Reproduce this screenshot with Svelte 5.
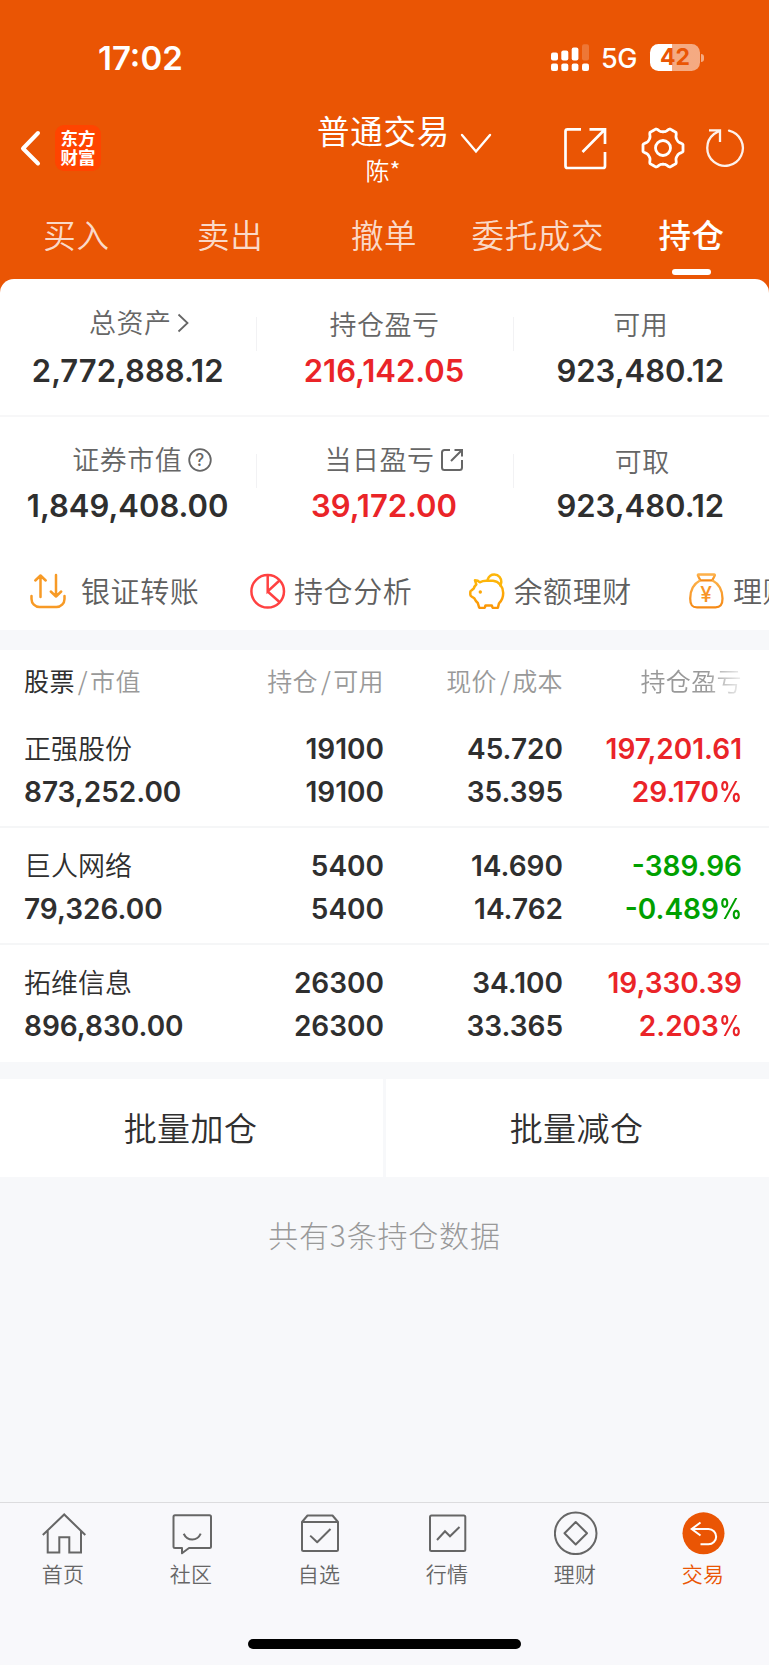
<script lang="ts">
  interface Stat {
    label: string;
    value: string;
    icon?: "arrow" | "help" | "share";
    shift?: number;
    up?: boolean;
  }

  interface Holding {
    name: string;
    marketValue: string;
    amount: string;
    available: string;
    price: string;
    cost: string;
    profit: string;
    percent: string;
  }

  const tabs = ["买入", "卖出", "撤单", "委托成交", "持仓"];
  let activeTab = $state("持仓");

  const statRows: Stat[][] = [
    [
      { label: "总资产", value: "2,772,888.12", icon: "arrow", shift: 22 },
      { label: "持仓盈亏", value: "216,142.05", up: true },
      { label: "可用", value: "923,480.12" },
    ],
    [
      { label: "证券市值", value: "1,849,408.00", icon: "help", shift: 28 },
      { label: "当日盈亏", value: "39,172.00", icon: "share", shift: 20, up: true },
      { label: "可取", value: "923,480.12", shift: 3 },
    ],
  ];

  const actions = [
    { id: "transfer", label: "银证转账" },
    { id: "analysis", label: "持仓分析" },
    { id: "piggy", label: "余额理财" },
    { id: "bag", label: "理财" },
  ];

  const holdings: Holding[] = [
    {
      name: "正强股份",
      marketValue: "873,252.00",
      amount: "19100",
      available: "19100",
      price: "45.720",
      cost: "35.395",
      profit: "197,201.61",
      percent: "29.170",
    },
    {
      name: "巨人网络",
      marketValue: "79,326.00",
      amount: "5400",
      available: "5400",
      price: "14.690",
      cost: "14.762",
      profit: "-389.96",
      percent: "-0.489",
    },
    {
      name: "拓维信息",
      marketValue: "896,830.00",
      amount: "26300",
      available: "26300",
      price: "34.100",
      cost: "33.365",
      profit: "19,330.39",
      percent: "2.203",
    },
  ];

  const navItems = ["首页", "社区", "自选", "行情", "理财", "交易"];
  let activeNav = $state("交易");

  // six flat teeth with rounded valleys for the settings icon
  function gearPath(c: number) {
    const points: string[] = [];
    for (let deg = 0; deg < 360; deg += 2) {
      const a = (deg * Math.PI) / 180;
      const offset = ((((deg + 30) % 60) - 30) * Math.PI) / 180;
      const wave = 18.6 + 2.6 * Math.tanh(1.5 * Math.cos(6 * a));
      const d = Math.min(wave, 20 / Math.cos(offset));
      points.push(`${(c + d * Math.cos(a)).toFixed(2)} ${(c + d * Math.sin(a)).toFixed(2)}`);
    }
    return `M${points.join("L")}Z`;
  }
</script>

<div class="page">
  <header>
    <div class="status-bar">
      <span class="time">17:02</span>
      <svg class="signal" width="38" height="28" viewBox="0 0 38 28" fill="#fff">
        <rect x="0" y="8.5" width="7" height="8" rx="2" />
        <rect x="10.3" y="6.5" width="7" height="10" rx="2" />
        <rect x="20.7" y="3.5" width="6.7" height="13" rx="2" />
        <rect x="31" y="0.3" width="7" height="16.2" rx="2" opacity="0.2" />
        <rect x="0" y="19.5" width="7" height="7.5" rx="2" />
        <rect x="10.3" y="19.5" width="7" height="7.5" rx="2" />
        <rect x="20.7" y="19.5" width="6.7" height="7.5" rx="2" />
        <rect x="31" y="19.5" width="7" height="7.5" rx="2" />
      </svg>
      <span class="network">5G</span>
      <span class="battery">42</span>
      <span class="battery-tip"></span>
    </div>

    <div class="title-bar">
      <div class="left">
        <svg width="24" height="40" viewBox="0 0 24 40" fill="none" stroke="#fff" stroke-width="4" stroke-linecap="round" stroke-linejoin="round">
          <path d="M19 5 4 20.5 19 35.5" />
        </svg>
        <div class="logo"><span>东方</span><span>财富</span></div>
      </div>
      <div class="title">
        <div class="account">普通交易</div>
        <div class="user">陈*</div>
      </div>
      <div class="right">
        <svg class="chevron" width="32" height="22" viewBox="0 0 32 22" fill="none" stroke="#fff" stroke-width="2.4" stroke-linecap="round">
          <path d="M2 2 16 18.5 30 2" />
        </svg>
        <svg width="44" height="44" viewBox="0 0 44 44" fill="none" stroke="#fff" stroke-width="2.7">
          <path d="M18 3.3H4.5a2 2 0 0 0-2 2V40a2 2 0 0 0 2 2H40a2 2 0 0 0 2-2V26M26.5 3.3H42V18M42 3.3 19.5 26" />
        </svg>
        <svg class="gear" width="46" height="46" viewBox="0 0 46 46" fill="none" stroke="#fff" stroke-width="2.8" stroke-linejoin="round">
          <path d={gearPath(23)} />
          <circle cx="23" cy="23" r="7.5" />
        </svg>
        <svg class="refresh" width="44" height="44" viewBox="0 0 44 44" fill="none" stroke="#fff" stroke-width="2.3" opacity="0.92">
          <path stroke-linecap="round" d="M26 4.6A17.8 17.8 0 1 1 11 8" />
          <path d="M11 8 17 4.6M6 4.4H17V16" />
        </svg>
      </div>
    </div>

    <nav class="tabs">
      {#each tabs as tab}
        <button class:active={tab === activeTab} onclick={() => (activeTab = tab)}>{tab}</button>
      {/each}
    </nav>

    <section class="summary">
      {#each statRows as row}
        <div class="stat-row">
          {#each row as stat}
            <div class="stat">
              <div class="label" class:with-icon={stat.icon} style="padding-left: {stat.shift ?? 0}px">
                {stat.label}
                {#if stat.icon === "arrow"}
                  <svg class="icon-arrow" width="12" height="20" viewBox="0 0 12 20" fill="none" stroke="#666" stroke-width="1.8">
                    <path d="M1.5 1.5 10.5 10 1.5 18.5" />
                  </svg>
                {:else if stat.icon === "help"}
                  <svg class="icon-help" width="24" height="24" viewBox="0 0 24 24" fill="none" stroke="#666" stroke-width="1.8">
                    <circle cx="12" cy="12" r="10.8" />
                    <text x="12" y="18" text-anchor="middle" fill="#666" stroke="none">?</text>
                  </svg>
                {:else if stat.icon === "share"}
                  <svg class="icon-share" width="24" height="24" viewBox="0 0 24 24" fill="none" stroke="#666" stroke-width="2">
                    <path d="M10 2H4.5A2.5 2.5 0 0 0 2 4.5V19.5A2.5 2.5 0 0 0 4.5 22H19.5A2.5 2.5 0 0 0 22 19.5V12M14.5 2H22V8.5M22 2 11 13" />
                  </svg>
                {/if}
              </div>
              <div class="value" class:up={stat.up}>{stat.value}</div>
            </div>
          {/each}
        </div>
      {/each}

      <div class="actions">
        {#each actions as action}
          <button class="action {action.id}">
            {#if action.id === "transfer"}
              <svg width="36" height="36" viewBox="0 0 36 36" fill="none" stroke="#f79a26" stroke-width="2.5" stroke-linecap="round" stroke-linejoin="round">
                <path d="M1.5 23v3a8 8 0 0 0 8 8h17a8 8 0 0 0 8-8v-3M10.5 24V2.5M5.3 7.5 10.5 2.5 15.7 7.5M26 2V23.5M20.8 18.5l5.2 5 5.2-5" />
              </svg>
            {:else if action.id === "analysis"}
              <svg width="36" height="36" viewBox="0 0 36 36" fill="none" stroke="#ff4141" stroke-width="2.5">
                <circle cx="17.7" cy="18.3" r="16.3" />
                <path d="M17.7 2V18.5L29.5 7.5M17.7 18.5 30 29.5" />
              </svg>
            {:else if action.id === "piggy"}
              <svg width="36" height="36" viewBox="0 0 36 36" fill="none" stroke="url(#pig)" stroke-width="2.5" stroke-linecap="round" stroke-linejoin="round">
                <defs>
                  <linearGradient id="pig" x1="0" y1="0" x2="0" y2="1">
                    <stop offset="0" stop-color="#fdb60a" />
                    <stop offset="1" stop-color="#fb9708" />
                  </linearGradient>
                </defs>
                <path d="M6 7.3Q9 7.3 10.7 9.3Q14 7.6 18 7.8H24C30 8.3 34.2 14 34.2 20C34.2 25 32.5 28 30 30.3L29 34.3Q28.8 35 28 35H24.5Q23.6 35 23.3 34L22.8 32.5H16.5L16 34Q15.6 35 14.8 35H11.5Q10.4 35 10 34L8.8 30Q6.5 28 5.3 25.3L2.5 23.5Q1.3 22.8 1.3 21.5V19Q1.3 18 2.3 17.5L4.8 15.5Q5.5 13 7.3 11.5Z" />
                <path stroke="#fdb60a" d="M18.7 6.5C20 3 22.5 1.6 25.3 1.6C30 1.6 32.5 5.5 32.3 9Q32.2 11 31.2 12.5" />
                <circle cx="11.3" cy="19" r="1.7" fill="#fca708" stroke="none" />
              </svg>
            {:else}
              <svg width="36" height="36" viewBox="0 0 36 36" fill="none" stroke="url(#bag)" stroke-width="2.3" stroke-linejoin="round">
                <defs>
                  <linearGradient id="bag" x1="0" y1="0" x2="0" y2="1">
                    <stop offset="0" stop-color="#fdb14a" />
                    <stop offset="1" stop-color="#f58a16" />
                  </linearGradient>
                </defs>
                <path d="M9.5 1.5H25.2Q26.2 1.5 25.8 2.5L23.3 7.3H11.3L8.9 2.5Q8.5 1.5 9.5 1.5Z" />
                <path d="M11.3 7.3C4.5 11 1.2 17.5 1.2 25.5C1.2 32 3 34.3 8 34.3H26.5C31.5 34.3 33.5 32 33.5 25.5C33.5 17.5 30 11 23.3 7.3" />
                <text x="17.4" y="28.7" text-anchor="middle" fill="#f79527" stroke="none">¥</text>
              </svg>
            {/if}
            <span>{action.label}</span>
          </button>
        {/each}
      </div>
    </section>
  </header>

  <section class="holdings">
    <div class="row head">
      <div><b>股票</b><i>/</i>市值</div>
      <div>持仓<i>/</i>可用</div>
      <div>现价<i>/</i>成本</div>
      <div class="fade">持仓盈亏</div>
    </div>
    {#each holdings as item}
      {@const down = item.profit.startsWith("-")}
      <div class="row">
        <div><span class="name">{item.name}</span>{item.marketValue}</div>
        <div><span>{item.amount}</span>{item.available}</div>
        <div><span>{item.price}</span>{item.cost}</div>
        <div class={down ? "down" : "up"}><span>{item.profit}</span>{item.percent}<em>%</em></div>
      </div>
    {/each}
  </section>

  <div class="batch">
    <button>批量加仓</button>
    <button>批量减仓</button>
  </div>

  <p class="total">共有3条持仓数据</p>

  <footer>
    <nav class="bottom-nav">
      {#each navItems as item, i}
        <button class:active={item === activeNav} onclick={() => (activeNav = item)}>
          <svg width="44" height="44" viewBox="0 0 44 44" fill="none" stroke="#666" stroke-width="2">
            {#if i === 0}
              <path d="M0.8 24 22.2 3.5 43.3 24M5.7 20V41.6H17.3V26.3H27.3V41.6H39V20" />
            {:else if i === 1}
              <path stroke-linejoin="round" d="M5 4.2H39.5a1.5 1.5 0 0 1 1.5 1.5V35.5a1.5 1.5 0 0 1-1.5 1.5H19L12 42.3V37H5a1.5 1.5 0 0 1-1.5-1.5V5.7a1.5 1.5 0 0 1 1.5-1.5ZM13.7 22.7Q16.5 28.5 22.3 28.5T30.7 22.7" />
            {:else if i === 2}
              <path stroke-linejoin="round" d="M4 11V38.5a1.5 1.5 0 0 0 1.5 1.5H38.5a1.5 1.5 0 0 0 1.5-1.5V11L34.5 4.5H9.5ZM4 11H40M12.2 24.6 19.2 31.3 32.5 18" />
            {:else if i === 3}
              <rect x="4" y="4.5" width="35.3" height="35.5" rx="1.5" />
              <path d="M11 29 19 20.3 24 25.3 33.5 16" />
            {:else if i === 4}
              <circle cx="21.7" cy="22.3" r="20.8" />
              <path stroke-linejoin="round" d="M21.700 11 33 22.3 21.7 33.5 10.5 22.3Z" />
            {:else}
              <circle cx="21.5" cy="22.3" r="21" fill="#ea5504" stroke="none" />
              <path stroke="#fff" d="M18.5 11.5 9.7 18 18.5 24.5M9.7 18H26.5a7.6 7.6 0 0 1 0 15.3H18.5" />
            {/if}
          </svg>
          <span>{item}</span>
        </button>
      {/each}
    </nav>
    <div class="home-indicator"></div>
  </footer>
</div>

<style>
  :global(body) {
    background: #f7f8fa;
  }

  .page {
    display: flex;
    flex-direction: column;
    width: 769px;
    height: 1665px;
    overflow: hidden;
    background: #f7f8fa;
    color: #2f2f2f;
    font-family: "Noto Sans CJK SC", sans-serif;
    font-weight: 350;
  }

  button {
    padding: 0;
    border: none;
    background: none;
    color: inherit;
    font: inherit;
    cursor: pointer;
  }

  svg {
    display: block;
    flex: none;
  }

  header {
    background: #ea5504;
    color: #fff;
  }

  .status-bar {
    display: flex;
    align-items: center;
    box-sizing: border-box;
    height: 110px;
    padding: 5px 65px 0 98px;
    font-family: Inter, sans-serif;
  }

  .time {
    flex: 1;
    font-size: 33px;
    font-weight: 600;
  }

  .network {
    width: 35px;
    margin: 2px 14px 0 12px;
    font-size: 27px;
    font-weight: 500;
    letter-spacing: -0.5px;
  }

  .battery {
    width: 50px;
    height: 27px;
    border-radius: 8.5px;
    background: linear-gradient(to right, #fff 22px, rgba(255, 255, 255, 0.5) 22px);
    color: #ea5504;
    font-size: 23px;
    font-weight: 700;
    line-height: 27px;
    text-align: center;
  }

  .battery-tip {
    width: 3px;
    height: 8px;
    margin-left: 1px;
    border-radius: 0 3px 3px 0;
    background: rgba(255, 255, 255, 0.5);
  }

  .title-bar {
    display: grid;
    grid-template-columns: 310px 146px 1fr;
    height: 80px;
  }

  .left,
  .right {
    display: flex;
    align-items: center;
    height: 76px;
  }

  .left {
    padding-left: 19px;
  }

  .logo {
    display: flex;
    flex-direction: column;
    justify-content: center;
    width: 46px;
    height: 46px;
    margin-left: 12px;
    border-radius: 9px;
    background: #ff4400;
    font-size: 17.5px;
    font-weight: 700;
    line-height: 19px;
    text-align: center;
  }

  .logo span {
    position: relative;
    top: -1px;
  }

  .title {
    text-align: center;
    white-space: nowrap;
  }

  .account {
    padding-left: 1px;
    font-size: 32.5px;
    line-height: 40px;
    letter-spacing: 0.7px;
    font-weight: 400;
  }

  .user {
    font-size: 24px;
    line-height: 40px;
  }

  .chevron {
    margin: -8px 71px 0 4px;
  }

  .gear {
    margin-left: 33px;
  }

  .refresh {
    margin-left: 17px;
  }

  .tabs {
    display: grid;
    grid-template-columns: repeat(5, 1fr);
    height: 89px;
  }

  .tabs button {
    position: relative;
    height: 89px;
    padding: 0 1px 3px 0;
    color: rgba(255, 255, 255, 0.8);
    font-size: 32.5px;
    letter-spacing: 0.6px;
  }

  .tabs button.active {
    color: #fff;
    font-weight: 500;
  }

  .tabs button.active::after {
    content: "";
    position: absolute;
    bottom: 4px;
    left: 50%;
    width: 39px;
    height: 6px;
    margin-left: -20px;
    border-radius: 3px;
    background: #fff;
  }

  .summary {
    border-radius: 14px 14px 0 0;
    background: #fff;
    color: #2f2f2f;
    overflow: hidden;
  }

  .stat-row {
    display: grid;
    grid-template-columns: repeat(3, 1fr);
    box-sizing: border-box;
    height: 132px;
    padding-top: 23px;
  }

  .stat-row:first-child {
    height: 138px;
    padding-top: 24px;
    border-bottom: 2px solid #f7f7f8;
  }

  .stat + .stat {
    background: linear-gradient(#f2f2f4, #f2f2f4) 0 14px / 1px 34px no-repeat;
  }

  .label {
    display: flex;
    align-items: center;
    justify-content: center;
    box-sizing: border-box;
    height: 40px;
    color: #666;
    font-size: 27px;
    letter-spacing: 0.5px;
  }

  .label.with-icon {
    padding-bottom: 4px;
  }

  .icon-arrow,
  .icon-help,
  .icon-share {
    margin: 3px 0 0 6px;
  }

  .icon-help text {
    font: 500 17px Inter, sans-serif;
  }

  .value {
    padding: 6px 1px 0 0;
    font-family: Inter, sans-serif;
    font-size: 31px;
    font-weight: 600;
    line-height: 40px;
    text-align: center;
  }

  .stat-row:first-child .value {
    padding-top: 8px;
  }

  .up {
    color: #ea2428;
  }

  .down {
    color: #00a000;
  }

  .actions {
    display: flex;
    height: 81px;
    padding-left: 30px;
  }

  .action {
    display: flex;
    flex: none;
    align-items: center;
    width: 219.5px;
    padding-top: 2px;
    color: #5f5f5f;
    font-size: 29px;
    letter-spacing: 0.6px;
    white-space: nowrap;
  }

  .action span {
    margin: -2px 0 0 8.5px;
  }

  .action.transfer span {
    margin-left: 15px;
  }

  .action text {
    font: 500 21px Inter, sans-serif;
  }

  .holdings {
    border-top: 20px solid #f7f8fa;
    background: #fff;
  }

  .row {
    display: grid;
    grid-template-columns: 180px 180px 179px 179px;
    box-sizing: border-box;
    height: 117px;
    padding: 17px 27px 0 24px;
    border-bottom: 2px solid #f5f6f7;
    font-family: Inter, "Noto Sans CJK SC", sans-serif;
    font-size: 28px;
    font-weight: 600;
    line-height: 43px;
  }

  .row:last-child {
    border-bottom: none;
  }

  .row > div {
    text-align: right;
    white-space: nowrap;
  }

  .row > div:first-child {
    text-align: left;
  }

  .row span {
    display: block;
    height: 43px;
  }

  .row .name {
    font-family: "Noto Sans CJK SC", sans-serif;
    font-size: 27px;
    font-weight: 350;
    line-height: 39px;
  }

  /* narrower percent sign */
  .row em {
    display: inline-block;
    margin-left: -5px;
    font-style: normal;
    transform: scaleX(0.82);
    transform-origin: right;
  }

  .row.head {
    height: 61px;
    padding-top: 0;
    border-bottom: none;
    color: #999;
    font-family: "Noto Sans CJK SC", sans-serif;
    font-size: 25px;
    font-weight: 350;
    line-height: 61px;
    letter-spacing: 0.4px;
  }

  .head b {
    color: #2f2f2f;
    font-weight: 400;
  }

  .head i {
    margin: 0 2px 0 3px;
    font-style: normal;
  }

  .fade {
    mask-image: linear-gradient(to right, #000 80%, rgba(0, 0, 0, 0.15) 100%);
  }

  .batch {
    display: grid;
    grid-template-columns: 1fr 1fr;
    gap: 3px;
    height: 98px;
    margin-top: 17px;
  }

  .batch button {
    padding: 0 2px 3px 0;
    background: #fff;
    font-size: 33px;
    letter-spacing: 0.4px;
  }

  .total {
    margin: 37px 0 0;
    color: #999;
    font-size: 30px;
    font-weight: 300;
    line-height: 40px;
    letter-spacing: 0.8px;
    text-align: center;
  }

  footer {
    box-sizing: border-box;
    height: 163px;
    margin-top: auto;
    border-top: 1px solid #dcdcde;
    background: #f8f8fb;
  }

  .bottom-nav {
    display: grid;
    grid-template-columns: repeat(6, 1fr);
    height: 136px;
    padding-right: 1px;
  }

  .bottom-nav button {
    display: flex;
    flex-direction: column;
    align-items: center;
    padding-top: 8px;
    color: #666;
    font-size: 21px;
    line-height: 36px;
  }

  .bottom-nav span {
    padding-right: 2px;
    letter-spacing: 0.3px;
  }

  .bottom-nav button.active {
    color: #ea5504;
  }

  .home-indicator {
    width: 273px;
    height: 10px;
    margin: 0 auto;
    border-radius: 5px;
    background: #000;
  }
</style>
